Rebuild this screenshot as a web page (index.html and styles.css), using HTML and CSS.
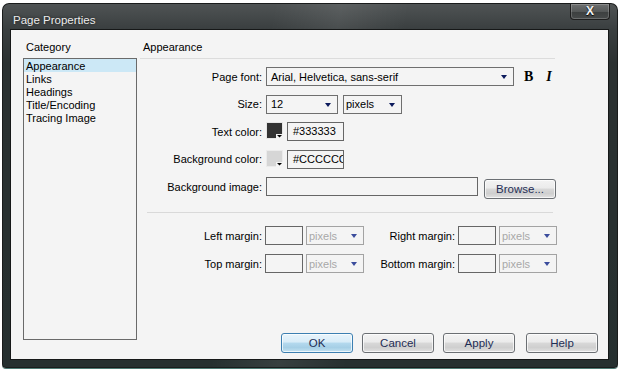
FILE: index.html
```html
<!DOCTYPE html>
<html lang="en">
  <head>
    <meta charset="UTF-8" />
    <meta name="viewport" content="width=device-width, initial-scale=1.0" />
    <title>Page Properties</title>
    <link rel="stylesheet" href="styles.css">
  </head>
  <body>
    <div class="window">
      <div class="titlebar">
        <span class="title">Page Properties</span>
        <span class="close-btn">X</span>
      </div>

      <div class="client">
        <div class="sidebar">
          <div class="caption">Category</div>
          <ul class="listbox">
            <li class="selected">Appearance</li>
            <li>Links</li>
            <li>Headings</li>
            <li>Title/Encoding</li>
            <li>Tracing Image</li>
          </ul>
        </div>

        <div class="main">
          <div class="section-title">Appearance</div>

          <div class="form">
            <label class="lbl">Page font:</label>
            <div class="ctrl">
              <div class="select select-font"><span>Arial, Helvetica, sans-serif</span><i class="arrow"></i></div>
              <span class="style-btn bold">B</span>
              <span class="style-btn italic">I</span>
            </div>

            <label class="lbl">Size:</label>
            <div class="ctrl">
              <div class="select select-size"><span>12</span><i class="arrow"></i></div>
              <div class="select select-unit"><span>pixels</span><i class="arrow"></i></div>
            </div>

            <label class="lbl">Text color:</label>
            <div class="ctrl">
              <svg class="swatch" width="17" height="17" viewBox="0 0 17 17">
                <rect x="0" y="0" width="17" height="17" fill="#e6e6e6" />
                <rect x="1" y="1" width="15" height="15" fill="#333333" />
                <rect x="10" y="12" width="7" height="5" fill="#f4f4f4" />
                <polygon points="11,13 16,13 13.5,15.5" fill="#000" />
              </svg>
              <div class="input input-color">#333333</div>
            </div>

            <label class="lbl">Background color:</label>
            <div class="ctrl">
              <svg class="swatch" width="17" height="17" viewBox="0 0 17 17">
                <rect x="0" y="0" width="17" height="17" fill="#ebebeb" />
                <rect x="1" y="1" width="15" height="15" fill="#d6d6d6" />
                <rect x="10" y="12" width="7" height="5" fill="#f4f4f4" />
                <polygon points="11,13 16,13 13.5,15.5" fill="#000" />
              </svg>
              <div class="input input-color">#CCCCCC</div>
            </div>

            <label class="lbl">Background image:</label>
            <div class="ctrl">
              <div class="input input-image"></div>
              <span class="btn btn-browse">Browse...</span>
            </div>
          </div>

          <div class="separator"></div>

          <div class="margins">
            <label class="lbl">Left margin:</label>
            <div class="input input-margin"></div>
            <div class="select select-disabled"><span>pixels</span><i class="arrow"></i></div>
            <label class="lbl">Right margin:</label>
            <div class="input input-margin"></div>
            <div class="select select-disabled"><span>pixels</span><i class="arrow"></i></div>

            <label class="lbl">Top margin:</label>
            <div class="input input-margin"></div>
            <div class="select select-disabled"><span>pixels</span><i class="arrow"></i></div>
            <label class="lbl">Bottom margin:</label>
            <div class="input input-margin"></div>
            <div class="select select-disabled"><span>pixels</span><i class="arrow"></i></div>
          </div>
        </div>

        <div class="footer">
          <span class="btn btn-default">OK</span>
          <span class="btn">Cancel</span>
          <span class="btn">Apply</span>
          <span class="btn btn-help">Help</span>
        </div>
      </div>
    </div>
  </body>
</html>
```

FILE: styles.css
```css
* {
  box-sizing: border-box;
}

body {
  margin: 0;
  width: 620px;
  height: 371px;
  background-color: #ffffff;
  font-family: "Liberation Sans", Arial, sans-serif;
  font-size: 11px;
  color: #000;
  overflow: hidden;
}

.window {
  margin: 3px 2px 0 2px;
  width: 616px;
  height: 365px;
  padding: 0 9px 8px 8px;
  display: flex;
  flex-direction: column;
  border-radius: 7px 7px 4px 4px;
  background:
    linear-gradient(100deg, rgba(255, 255, 255, 0) 40%, rgba(255, 255, 255, 0.08) 50%, rgba(255, 255, 255, 0) 60%),
    linear-gradient(to bottom, #505455 0, #3a3f40 26px, #2b3131 60px, #263030 100%);
  box-shadow: inset 0 0 0 1px #1a1c1c, 0 1px 0 #4d7a74;
}

.titlebar {
  height: 26px;
  display: flex;
  justify-content: space-between;
  align-items: flex-start;
}

.title {
  margin-top: 10px;
  padding-left: 3px;
  line-height: 14px;
  font-size: 11.5px;
  color: #ececec;
  text-shadow: 0 0 3px rgba(0, 0, 0, 0.6);
}

.close-btn {
  margin-top: 1px;
  margin-right: -1px;
  width: 40px;
  height: 16px;
  line-height: 14px;
  text-align: center;
  font-weight: bold;
  font-size: 12px;
  color: #f2f2f2;
  border: 1px solid #1e1e1e;
  border-top: none;
  border-radius: 0 0 4px 4px;
  background: linear-gradient(to bottom, #6e7070 0, #555858 50%, #3c3f3f 51%, #474a4a 100%);
  box-shadow: inset 0 0 0 1px rgba(255, 255, 255, 0.2);
  text-shadow: 0 1px 1px #000;
}

.client {
  flex: 1;
  display: grid;
  grid-template-columns: 114px 1fr;
  grid-template-rows: 1fr auto;
  column-gap: 3px;
  padding: 11px 10px 6px 12px;
  border: 1px solid #161818;
  background-color: #f4f4f4;
}

.sidebar {
  grid-row: 1 / 3;
}

.caption {
  padding-left: 3px;
  line-height: 13px;
  margin-bottom: 4px;
}

.listbox {
  list-style: none;
  margin: 0;
  padding: 0;
  height: 282px;
  border: 1px solid #6a6a6a;
  background-color: #f4f4f4;
}

.listbox li {
  padding-left: 2px;
  height: 13px;
  line-height: 14px;
}

.listbox li.selected {
  background-color: #cce8f6;
}

.main {
  grid-column: 2;
}

.section-title {
  width: 415px;
  padding-left: 3px;
  padding-bottom: 4px;
  line-height: 13px;
  border-bottom: 1px solid #dcdcdc;
}

.form {
  margin-top: 8px;
  display: grid;
  grid-template-columns: 122px 1fr;
  grid-auto-rows: 19px;
  column-gap: 4px;
  row-gap: 8.5px;
}

.lbl {
  display: flex;
  align-items: center;
  justify-content: flex-end;
  white-space: nowrap;
}

.ctrl {
  display: flex;
  align-items: center;
  gap: 4px;
}

.select {
  position: relative;
  height: 19px;
  display: flex;
  align-items: center;
  padding-left: 4px;
  border: 1px solid #6f6f6f;
  background-color: #f4f4f4;
  white-space: nowrap;
}

.select .arrow {
  position: absolute;
  right: 6px;
  top: 7px;
  width: 0;
  height: 0;
  border-left: 3.5px solid transparent;
  border-right: 3.5px solid transparent;
  border-top: 4px solid #0c1a5c;
}

.select-font {
  width: 248px;
}

.select-size {
  width: 72px;
}

.select-unit {
  width: 59px;
  margin-left: 1px;
  padding-left: 2px;
}

.style-btn {
  font-family: "Liberation Serif", "Times New Roman", serif;
  font-weight: bold;
  font-size: 14px;
  line-height: 19px;
}

.bold {
  margin-left: 6px;
}

.italic {
  margin-left: 9px;
  font-style: italic;
}

.swatch {
  display: block;
  align-self: flex-start;
}

.input {
  height: 19px;
  border: 1px solid #666;
  background-color: #f4f4f4;
  white-space: nowrap;
  overflow: hidden;
  line-height: 17px;
}

.input-color {
  width: 57px;
  padding-left: 5px;
}

.input-image {
  width: 212px;
}

.btn {
  display: inline-block;
  width: 72px;
  height: 20px;
  line-height: 18px;
  text-align: center;
  font-size: 11.5px;
  color: #1f2d55;
  border: 1px solid #6b6f73;
  border-radius: 3px;
  background: linear-gradient(to bottom, #f3f3f3 0, #ebebeb 45%, #d8d8d8 50%, #cfcfcf 75%, #e2e2e2 100%);
  box-shadow: inset 0 0 0 1px rgba(255, 255, 255, 0.7);
}

.btn-browse {
  margin-left: 2px;
  margin-top: 2px;
  align-self: flex-start;
}

.btn-default {
  border-color: #3c7fb1;
  background: linear-gradient(to bottom, #e8f4fb 0, #d8ecf8 45%, #b4d9ee 50%, #a6cfe6 75%, #c3e2f2 100%);
}

.separator {
  margin: 16px 0 0 7px;
  width: 406px;
  height: 1px;
  background-color: #d9d9d9;
}

.margins {
  margin-top: 13px;
  display: grid;
  grid-template-columns: 122px 38px 58px 88px 38px 58px;
  grid-auto-rows: 19px;
  column-gap: 3px;
  row-gap: 9px;
}

.input-margin {
  width: 38px;
}

.select-disabled {
  color: #a8a8a8;
  border-color: #a3a3a3;
  padding-left: 2px;
}

.select-disabled .arrow {
  border-top-color: #3b4c9c;
}

.footer {
  grid-column: 2;
  display: flex;
  justify-content: flex-end;
  gap: 9px;
}

.btn-help {
  margin-left: 2px;
}
```
